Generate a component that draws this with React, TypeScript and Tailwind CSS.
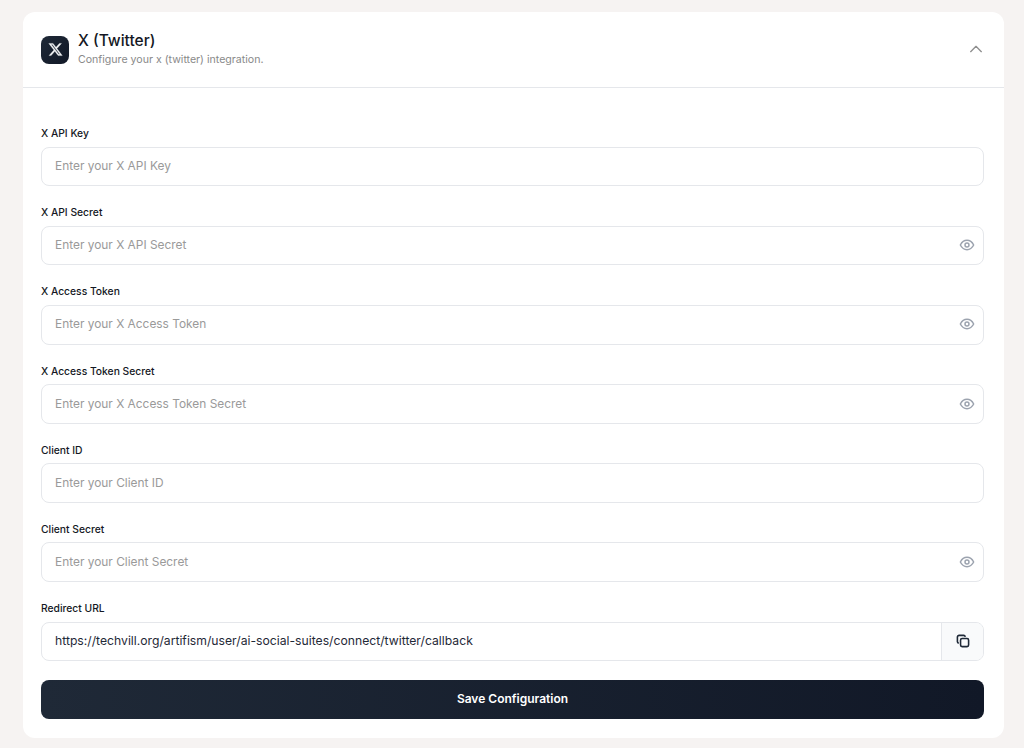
import React from "react";

const EyeIcon = () => (
  <svg width="16" height="16" viewBox="0 0 24 24" fill="none" stroke="#9ca3af" strokeWidth="2.2" strokeLinecap="round" strokeLinejoin="round">
    <path d="M2 12s3.6-7 10-7 10 7 10 7-3.6 7-10 7-10-7-10-7Z" />
    <circle cx="12" cy="12" r="3" />
  </svg>
);

const CopyIcon = () => (
  <svg width="14" height="14" viewBox="0 0 16 16" fill="none" stroke="#1f2937" strokeWidth="1.8" strokeLinejoin="round">
    <path d="M3.2 10.6A2 2 0 0 1 1.6 8.7V3.6a2 2 0 0 1 2-2h5.1a2 2 0 0 1 1.9 1.6" />
    <rect x="5.2" y="5.2" width="9.2" height="9.2" rx="1.8" />
  </svg>
);

const fields = [
  { label: "X API Key", placeholder: "Enter your X API Key", eye: false },
  { label: "X API Secret", placeholder: "Enter your X API Secret", eye: true },
  { label: "X Access Token", placeholder: "Enter your X Access Token", eye: true },
  { label: "X Access Token Secret", placeholder: "Enter your X Access Token Secret", eye: true },
  { label: "Client ID", placeholder: "Enter your Client ID", eye: false },
  { label: "Client Secret", placeholder: "Enter your Client Secret", eye: true },
];

export default function App() {
  return (
    <div className="h-[748px] overflow-hidden bg-[#f6f3f2] pl-[23px] pr-[20px] pt-3 font-['Inter',sans-serif]">
      <div className="h-[726px] rounded-xl bg-white">
        <div className="flex h-[76px] items-center justify-between border-b border-[#e5e7eb] pl-[18px] pr-5">
          <div className="flex items-center gap-[9px]">
            <div className="flex h-7 w-7 items-center justify-center rounded-lg bg-gradient-to-br from-[#1f2937] to-[#111827]">
              <svg width="15" height="15" viewBox="0 0 24 24" fill="#f3f4f6" stroke="#f3f4f6" strokeWidth="0.5">
                <path d="M18.244 2.25h3.308l-7.227 8.26 8.502 11.24H16.17l-5.214-6.817L4.99 21.75H1.68l7.73-8.835L1.254 2.25H8.08l4.713 6.231 5.45-6.231Zm-1.161 17.52h1.833L7.084 4.126H5.117L17.083 19.77Z" />
              </svg>
            </div>
            <div className="flex flex-col">
              <span className="-translate-y-px text-[15.5px] font-medium leading-5 text-[#141824]">X (Twitter)</span>
              <span className="text-[10.6px] leading-4 text-[#898989]">Configure your x (twitter) integration.</span>
            </div>
          </div>
          <svg width="16" height="16" viewBox="0 0 24 24" fill="none" stroke="#8f8f8f" strokeWidth="2" strokeLinecap="round" strokeLinejoin="round" className="-translate-y-px">
            <path d="m4 16 8-8 8 8" />
          </svg>
        </div>
        <div className="flex flex-col pl-[18px] pr-5 pt-[37.05px]">
          {fields.map((f) => (
            <div key={f.label} className="mb-[18.1px] flex flex-col">
              <label className="mb-[5.5px] h-[16px] text-[10.3px] font-medium leading-4 text-[#141824]">{f.label}</label>
              <div className="flex h-[39.6px] items-center justify-between rounded-lg border border-[#e5e7eb] bg-white pb-[0.6px] pl-[13px] pr-[8px]">
                <span className="text-[11.9px] text-[#9a9a9a]">{f.placeholder}</span>
                {f.eye && <EyeIcon />}
              </div>
            </div>
          ))}
          <div className="mb-[18.9px] flex flex-col">
            <label className="mb-[5.5px] h-[16px] text-[10.3px] font-medium leading-4 text-[#141824]">Redirect URL</label>
            <div className="flex h-[39.6px] items-stretch overflow-hidden rounded-lg border border-[#e5e7eb] bg-white">
              <span className="flex flex-1 items-center pl-[13px] text-[12.2px] text-[#1f2937]">
                https://techvill.org/artifism/user/ai-social-suites/connect/twitter/callback
              </span>
              <div className="flex w-[42px] items-center justify-center border-l border-[#e5e7eb] bg-[#f9fafb]">
                <CopyIcon />
              </div>
            </div>
          </div>
          <button className="flex h-[39px] items-center justify-center rounded-lg bg-gradient-to-r from-[#1f2937] to-[#111827] pb-[1px] text-[12px] font-semibold text-white">
            Save Configuration
          </button>
        </div>
      </div>
    </div>
  );
}
